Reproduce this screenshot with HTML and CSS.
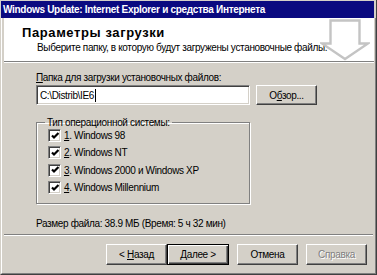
FILE: index.html
```html
<!DOCTYPE html>
<html>
<head>
<meta charset="utf-8">
<link rel="stylesheet" href="styles.css">
</head>
<body>
<div class="window">
  <div class="titlebar">Windows Update: Internet Explorer и средства Интернета</div>
  <div class="client">
    <div class="header">
      <div class="header-text">
        <div class="h-title">Параметры загрузки</div>
        <div class="h-sub">Выберите папку, в которую будут загружены установочные файлы.</div>
      </div>
      <svg class="h-icon" width="50" height="42" viewBox="0 0 50 42">
        <path d="M10.5 1.5 H39.5 V24.5 H48 L25 40 L2 24.5 H10.5 Z" fill="#fff" stroke="#c4c4c4" stroke-width="2.4" stroke-linejoin="miter"/>
      </svg>
    </div>
    <div class="content">
      <div class="lbl"><u>П</u>апка для загрузки установочных файлов:</div>
      <div class="path-row">
        <div class="input">C:\Distrib\IE6<span class="caret"></span></div>
        <button class="btn browse">О<u>б</u>зор...</button>
      </div>
      <fieldset class="group">
        <legend>Тип операционной системы:</legend>
        <div class="rows">
          <div class="check-row"><span class="checkbox"><svg width="9" height="9" viewBox="0 0 9 9"><path d="M1 3.5 L3 5.5 L7.5 1" fill="none" stroke="#000" stroke-width="2.2"/></svg></span><span><u>1</u>. Windows 98</span></div>
          <div class="check-row"><span class="checkbox"><svg width="9" height="9" viewBox="0 0 9 9"><path d="M1 3.5 L3 5.5 L7.5 1" fill="none" stroke="#000" stroke-width="2.2"/></svg></span><span><u>2</u>. Windows NT</span></div>
          <div class="check-row"><span class="checkbox"><svg width="9" height="9" viewBox="0 0 9 9"><path d="M1 3.5 L3 5.5 L7.5 1" fill="none" stroke="#000" stroke-width="2.2"/></svg></span><span><u>3</u>. Windows 2000 и Windows XP</span></div>
          <div class="check-row"><span class="checkbox"><svg width="9" height="9" viewBox="0 0 9 9"><path d="M1 3.5 L3 5.5 L7.5 1" fill="none" stroke="#000" stroke-width="2.2"/></svg></span><span><u>4</u>. Windows Millennium</span></div>
        </div>
      </fieldset>
      <div class="size">Размер файла: 38.9 МБ (Время: 5 ч 32 мин)</div>
    </div>
    <div class="footer">
      <button class="btn">&lt; <u>Н</u>азад</button>
      <button class="btn default">Далее &gt;</button>
      <button class="btn gap">Отмена</button>
      <button class="btn gap disabled">Справка</button>
    </div>
  </div>
</div>
</body>
</html>
```

FILE: styles.css
```css
* { box-sizing: border-box; }
html, body { margin: 0; padding: 0; }
body {
  width: 377px;
  height: 275px;
  overflow: hidden;
  font-family: "Liberation Sans", Arial, sans-serif;
  font-size: 10px;
  letter-spacing: -0.35px;
  color: #000;
  background: #d4d0c8;
}
.window {
  width: 377px;
  height: 275px;
  display: flex;
  flex-direction: column;
  background: #d4d0c8;
  border-left: 1px solid #d4d0c8;
  border-right: 1px solid #404040;
  border-bottom: 1px solid #404040;
}
.titlebar {
  height: 18px;
  margin: 0 2px 0 0;
  padding: 2px 0 0 2px;
  background: #0a0a80;
  color: #fff;
  font-weight: bold;
  font-size: 10px;
  letter-spacing: -0.3px;
  line-height: 14px;
  white-space: nowrap;
  border-top: 1px solid #d4d0c8;
}
.client {
  flex: 1;
  display: flex;
  flex-direction: column;
  padding: 0 2px 0 2px;
  border-left: 1px solid #fff;
  border-right: 1px solid #808080;
  border-bottom: 1px solid #808080;
}
.header {
  height: 44px;
  background: #fff;
  display: flex;
  justify-content: space-between;
  border-bottom: 1px solid #808080;
  box-shadow: 0 1px 0 #fff;
  margin: 0 -1px 0 0;
}
.header-text { padding: 8px 0 0 18px; min-width: 0; }
.h-title {
  font-weight: bold;
  font-size: 13px;
  letter-spacing: 0.6px;
  line-height: 14px;
}
.h-sub {
  padding: 0 0 0 15px;
  line-height: 13px;
  margin-top: 1px;
  white-space: nowrap;
}
.h-icon { margin: 1px 4px 0 0; flex: none; }
.content {
  flex: 1;
  padding: 9px 0 0 32px;
  border-bottom: 1px solid #808080;
  box-shadow: 0 1px 0 #fff;
}
.lbl { line-height: 13px; }
.path-row {
  display: flex;
  gap: 6px;
  margin-top: 1px;
}
.input {
  width: 214px;
  height: 20px;
  background: #fff;
  border-top: 1px solid #808080;
  border-left: 1px solid #808080;
  border-right: 1px solid #fff;
  border-bottom: 1px solid #fff;
  box-shadow: inset 1px 1px 0 #404040, inset -1px -1px 0 #d4d0c8;
  padding: 3px 0 0 3px;
  line-height: 13px;
  white-space: nowrap;
}
.caret {
  display: inline-block;
  width: 1px;
  height: 13px;
  background: #000;
  vertical-align: top;
  margin-left: 1px;
}
.btn {
  font: inherit;
  letter-spacing: inherit;
  color: #000;
  background: #d4d0c8;
  height: 21px;
  width: 61px;
  padding: 0;
  border-top: 1px solid #fff;
  border-left: 1px solid #fff;
  border-right: 1px solid #404040;
  border-bottom: 1px solid #404040;
  box-shadow: inset -1px -1px 0 #808080;
  line-height: 17px;
  text-align: center;
}
.browse { height: 20px; }
.group {
  width: 214px;
  margin: 11px 0 0 0;
  padding: 0 0 7px 11px;
  border: 1px solid #808080;
  box-shadow: 1px 1px 0 #fff, inset 1px 1px 0 #fff;
}
.group legend {
  padding: 0 2px;
  margin-left: -3px;
  line-height: 13px;
}
.rows { margin-top: -2px; }
.check-row {
  display: flex;
  align-items: center;
  height: 17.3px;
  gap: 2px;
}
.checkbox {
  width: 13px;
  height: 13px;
  flex: none;
  margin-right: 1px;
  background: #fff;
  border-top: 1px solid #808080;
  border-left: 1px solid #808080;
  border-right: 1px solid #fff;
  border-bottom: 1px solid #fff;
  box-shadow: inset 1px 1px 0 #404040, inset -1px -1px 0 #d4d0c8;
  display: flex;
  align-items: center;
  justify-content: center;
  padding: 1px 0 0 1px;
}
.checkbox svg { display: block; }
.size {
  margin-top: 13px;
  line-height: 13px;
}
.footer {
  height: 38px;
  display: flex;
  padding: 9px 0 0 102px;
}
.btn.default {
  border: 1px solid #000;
  box-shadow: inset 1px 1px 0 #fff, inset -1px -1px 0 #404040, inset -2px -2px 0 #808080;
  width: 62px;
}
.btn.gap { margin-left: 8px; }
.btn.disabled { color: #808080; text-shadow: 1px 1px 0 #fff; }
```
